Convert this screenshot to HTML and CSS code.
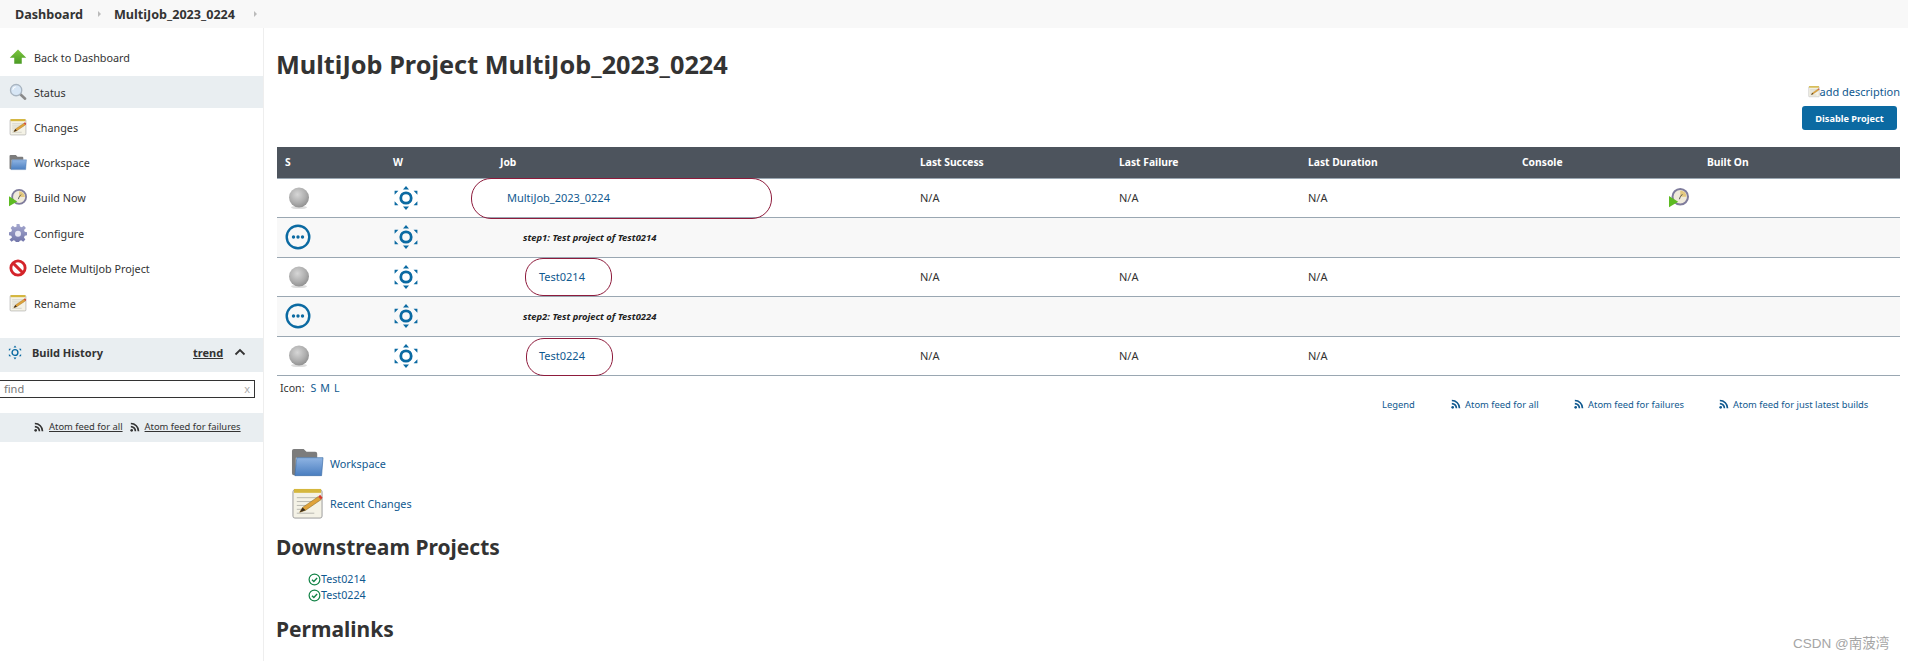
FILE: index.html
```html
<!DOCTYPE html>
<html lang="en">
<head>
<meta charset="utf-8">
<title>MultiJob_2023_0224</title>
<link rel="stylesheet" href="styles.css">
</head>
<body>
<svg class="sprite" aria-hidden="true">
  <defs>
    <radialGradient id="gBall" cx="42%" cy="35%" r="70%"><stop offset="0" stop-color="#d6d6d6"/><stop offset=".6" stop-color="#aeaeae"/><stop offset="1" stop-color="#8c8c8c"/></radialGradient>
    <linearGradient id="gFolder" x1="0" y1="0" x2="0" y2="1"><stop offset="0" stop-color="#8fb4e3"/><stop offset="1" stop-color="#4a7ec0"/></linearGradient>
    <linearGradient id="gArrow" x1="0" y1="0" x2="0" y2="1"><stop offset="0" stop-color="#7cc63e"/><stop offset="1" stop-color="#4a9a24"/></linearGradient>
    <linearGradient id="gGear" x1="0" y1="0" x2="0" y2="1"><stop offset="0" stop-color="#a5a8cf"/><stop offset="1" stop-color="#6f73a8"/></linearGradient>
    <symbol id="i-ball" viewBox="0 0 24 24"><ellipse cx="12" cy="21.500" rx="8" ry="1.600" fill="#ddd"/><circle cx="12" cy="11.500" r="10" fill="url(#gBall)"/></symbol>
    <symbol id="i-sched" viewBox="0 0 24 24"><circle cx="12" cy="12" r="5.200" fill="none" stroke="#0b6aa2" stroke-width="2.800"/><path fill="#0b6aa2" d="M12 0l3 3.600H9zM12 24l-3-3.600h6zM.6 4.800h3.800L.6 8.800zM23.400 4.800h-3.800l3.800 4zM.6 19.200h3.800L.6 15.200zM23.400 19.200h-3.800l3.800-4z"/></symbol>
    <symbol id="i-pending" viewBox="0 0 26 26"><circle cx="13" cy="13" r="11.300" fill="none" stroke="#0b6aa2" stroke-width="2.400"/><circle cx="8.500" cy="13" r="1.700" fill="#0b6aa2"/><circle cx="13" cy="13" r="1.700" fill="#0b6aa2"/><circle cx="17.500" cy="13" r="1.700" fill="#0b6aa2"/></symbol>
    <symbol id="i-up" viewBox="0 0 24 24"><path fill="url(#gArrow)" d="M12 2L23 13h-6v8H7v-8H1z"/></symbol>
    <symbol id="i-search" viewBox="0 0 24 24"><path d="M14 14l7.500 7" stroke="#8a8a8a" stroke-width="3.400" stroke-linecap="round"/><circle cx="9.500" cy="9.500" r="7.500" fill="#d7e6f5" stroke="#a8b4c0" stroke-width="1.800"/><path d="M5 9a5 5 0 0 1 4-4" fill="none" stroke="#fff" stroke-width="1.500"/></symbol>
    <symbol id="i-note" viewBox="0 0 34 34"><rect x="2" y="3" width="30" height="29" rx="2" fill="#f4f2e6" stroke="#9a9a9a"/><rect x="3" y="2" width="28" height="4" fill="#d5b73d"/><path d="M6 11h22M6 15h22M6 19h12M6 23h8M6 27h18" stroke="#b8b8b0"/><path d="M9 26l3-5L28 10l3 3-16 11z" fill="#e0a33a" stroke="#8b6a20" stroke-width=".6"/><path d="M28 10l3 3 1.500-2-2.500-3z" fill="#d43c2c"/><path d="M9 26l3-5 3 3z" fill="#3a2c1c"/></symbol>
    <symbol id="i-folder" viewBox="0 0 34 32"><path d="M1 3a2 2 0 0 1 2-2h10l3 3h9a2 2 0 0 1 2 2v4H5v18H3a2 2 0 0 1-2-2z" fill="#7c7c7c"/><path d="M6 10h27l-1.500 18.500H4z" fill="url(#gFolder)" stroke="#3f6fa8" stroke-width=".7"/></symbol>
    <symbol id="i-build" viewBox="0 0 24 24"><circle cx="13.500" cy="10.500" r="9.300" fill="#efeadb" stroke="#7f7c9c" stroke-width="2.400"/><path d="M13.500 3v7.500h7.500A7.500 7.500 0 0 0 13.500 3z" fill="#e3c87e"/><path d="M13.500 10.500l2.500-3M13.500 10.500l-1 3" stroke="#555" stroke-width="1.200"/><path d="M0 9.500v13.500l11-6.500z" fill="#5dbb22"/></symbol>
    <symbol id="i-gear" viewBox="0 0 24 24"><path fill="url(#gGear)" d="M10 1h4l.7 3.200 2.300 1 2.800-1.800 2.800 2.800L20 9l1 2.300 3 .7v4l-3 .7-1 2.300 1.800 2.800-2.800 2.800-2.800-1.800-2.300 1-.7 3h-4l-.7-3-2.300-1-2.800 1.800-2.800-2.800L4 19l-1-2.300-3-.7v-4l3-.7 1-2.300L2.200 6.200 5 3.400l2.800 1.800 2.300-1z" transform="translate(0 -1)"/><circle cx="12" cy="13" r="4" fill="#e8e8f4"/></symbol>
    <symbol id="i-no" viewBox="0 0 24 24"><circle cx="12" cy="12" r="9.500" fill="#fff" stroke="#d4242a" stroke-width="3.800"/><path d="M5.500 5.500l13 13" stroke="#d4242a" stroke-width="3.800"/></symbol>
    <symbol id="i-rss" viewBox="0 0 12 12"><circle cx="2" cy="10" r="1.600" fill="currentColor"/><path d="M1 5.500A5.500 5.500 0 0 1 6.500 11M1 1.800A9.200 9.200 0 0 1 10.200 11" fill="none" stroke="currentColor" stroke-width="2"/></symbol>
    <symbol id="i-check" viewBox="0 0 14 14"><circle cx="7" cy="7" r="5.800" fill="none" stroke="#138347" stroke-width="1.300"/><path d="M4.300 7.200l2 2 3.500-3.800" fill="none" stroke="#138347" stroke-width="1.500"/></symbol>
    <symbol id="i-sun" viewBox="0 0 24 24"><circle cx="12" cy="12" r="5" fill="none" stroke="#0b6aa2" stroke-width="2.400"/><path fill="#0b6aa2" d="M12 0l2.500 3.500h-5zM12 24l-2.500-3.500h5zM1.500 5.500h4L1.500 9.500zM22.500 5.500h-4l4 4zM1.500 18.500h4l-4-4zM22.500 18.500h-4l4-4z"/></symbol>
  </defs>
</svg>

<header class="crumbs">
  <a class="crumb">Dashboard</a><span class="sep"></span>
  <a class="crumb">MultiJob_2023_0224</a><span class="sep sep-end"></span>
</header>

<div class="page">
  <aside class="side">
    <nav class="tasks">
      <a class="task"><svg class="ticon"><use href="#i-up"/></svg>Back to Dashboard</a>
      <a class="task active"><svg class="ticon"><use href="#i-search"/></svg>Status</a>
      <a class="task"><svg class="ticon"><use href="#i-note"/></svg>Changes</a>
      <a class="task"><svg class="ticon"><use href="#i-folder"/></svg>Workspace</a>
      <a class="task"><svg class="ticon"><use href="#i-build"/></svg>Build Now</a>
      <a class="task"><svg class="ticon"><use href="#i-gear"/></svg>Configure</a>
      <a class="task"><svg class="ticon"><use href="#i-no"/></svg>Delete MultiJob Project</a>
      <a class="task"><svg class="ticon"><use href="#i-note"/></svg>Rename</a>
    </nav>
    <div class="hist-head">
      <svg class="sun"><use href="#i-sun"/></svg>
      <span class="hist-title">Build History</span>
      <a class="trend">trend</a>
      <svg class="chev" viewBox="0 0 12 8"><path d="M1.500 6.500L6 2l4.500 4.500" fill="none" stroke="#333" stroke-width="1.800"/></svg>
    </div>
    <div class="find"><span class="find-t">find</span><span class="find-x">x</span></div>
    <div class="hist-feed">
      <svg class="rss"><use href="#i-rss"/></svg><a>Atom feed for all</a>
      <svg class="rss"><use href="#i-rss"/></svg><a>Atom feed for failures</a>
    </div>
  </aside>

  <main class="main">
    <h1 class="title">MultiJob Project MultiJob_2023_0224</h1>
    <div class="desc"><svg class="desc-i"><use href="#i-note"/></svg><a>add description</a></div>
    <div class="btn-row"><button class="btn">Disable Project</button></div>

    <div class="tablewrap">
      <table class="jobs">
        <colgroup><col class="c1"><col class="c2"><col class="c3"><col class="c4"><col class="c5"><col class="c6"><col class="c7"><col></colgroup>
        <thead><tr><th>S</th><th>W</th><th>Job</th><th>Last Success</th><th>Last Failure</th><th>Last Duration</th><th>Console</th><th class="built">Built On</th></tr></thead>
        <tbody>
          <tr>
            <td><svg class="ball"><use href="#i-ball"/></svg></td><td><svg class="sched"><use href="#i-sched"/></svg></td>
            <td><a class="job j0">MultiJob_2023_0224</a></td><td>N/A</td><td>N/A</td><td>N/A</td><td></td>
            <td><svg class="node"><use href="#i-build"/></svg></td>
          </tr>
          <tr class="step">
            <td><svg class="pend"><use href="#i-pending"/></svg></td><td><svg class="sched"><use href="#i-sched"/></svg></td>
            <td colspan="6"><b class="stepname">step1: Test project of Test0214</b></td>
          </tr>
          <tr>
            <td><svg class="ball"><use href="#i-ball"/></svg></td><td><svg class="sched"><use href="#i-sched"/></svg></td>
            <td><a class="job j1">Test0214</a></td><td>N/A</td><td>N/A</td><td>N/A</td><td></td><td></td>
          </tr>
          <tr class="step">
            <td><svg class="pend"><use href="#i-pending"/></svg></td><td><svg class="sched"><use href="#i-sched"/></svg></td>
            <td colspan="6"><b class="stepname">step2: Test project of Test0224</b></td>
          </tr>
          <tr>
            <td><svg class="ball"><use href="#i-ball"/></svg></td><td><svg class="sched"><use href="#i-sched"/></svg></td>
            <td><a class="job j1">Test0224</a></td><td>N/A</td><td>N/A</td><td>N/A</td><td></td><td></td>
          </tr>
        </tbody>
      </table>
      <span class="oval oval-a"></span>
      <span class="oval oval-b"></span>
      <span class="oval oval-c"></span>
    </div>

    <div class="iconsize">Icon:<a>S</a><a>M</a><a>L</a></div>
    <div class="legend">
      <a class="leg">Legend</a>
      <a class="feed f1"><svg class="rss"><use href="#i-rss"/></svg>Atom feed for all</a>
      <a class="feed f2"><svg class="rss"><use href="#i-rss"/></svg>Atom feed for failures</a>
      <a class="feed f3"><svg class="rss"><use href="#i-rss"/></svg>Atom feed for just latest builds</a>
    </div>

    <div class="biglink first"><svg class="bigi"><use href="#i-folder"/></svg><a>Workspace</a></div>
    <div class="biglink"><svg class="bigi"><use href="#i-note"/></svg><a>Recent Changes</a></div>

    <h2 class="sub">Downstream Projects</h2>
    <ul class="down">
      <li><svg class="chk"><use href="#i-check"/></svg><a>Test0214</a></li>
      <li><svg class="chk"><use href="#i-check"/></svg><a>Test0224</a></li>
    </ul>
    <h2 class="sub perma">Permalinks</h2>
  </main>
</div>
<div class="mark">CSDN @南菠湾</div>
</body>
</html>
```

FILE: styles.css
```css
* { box-sizing: border-box; }
html, body { margin: 0; padding: 0; height: 661px; overflow: hidden; background: #fff; }
body { font-family: "Noto Sans", "Open Sans", sans-serif; font-size: 11px; color: #333; position: relative; }
a { color: #10598f; }
.sprite { position: absolute; width: 0; height: 0; }

.crumbs { height: 28px; background: #f8f8f8; display: flex; align-items: center; padding-left: 15px; }
.crumb { font-weight: 700; font-size: 12.6px; color: #333; }
.sep { width: 0; height: 0; margin: 0 13px 0 15px; border-left: 3px solid #bbb; border-top: 3px solid transparent; border-bottom: 3px solid transparent; }
.sep-end { margin-left: 19px; }

.page { display: flex; height: 633px; }
.side { width: 264px; flex: none; border-right: 1px solid #eee; }
.tasks { display: flex; flex-direction: column; gap: 3px; padding-top: 13px; }
.task { height: 32.2px; display: flex; align-items: center; gap: 7px; padding-left: 9px; color: #333; font-size: 10.8px; }
.task.active { background: #e9eef1; }
.ticon { width: 18px; height: 18px; flex: none; }

.hist-head { margin-top: 18px; height: 34px; background: #e9eef1; display: flex; align-items: center; padding: 0 0 5px 8px; }
.sun { width: 14px; height: 15px; }
.hist-title { font-weight: 700; margin-left: 10px; width: 161px; color: #333; }
.trend { font-weight: 700; color: #333; text-decoration: underline; }
.chev { width: 12px; height: 8px; margin-left: 11px; }
.find { height: 18px; margin-top: 8px; margin-right: 8px; border: 1px solid #333; border-left: 0; display: flex; justify-content: space-between; align-items: center; padding: 0 4px; color: #777; }
.find-x { color: #aaa; }
.hist-feed { margin-top: 15px; height: 29px; display: flex; align-items: center; background: #e9eef1; font-size: 9.4px; padding-left: 34px; }
.hist-feed a { color: #333; text-decoration: underline; margin-right: 7px; margin-left: 5px; line-height: 14px; }
.hist-feed .rss { color: #333; }
.rss { width: 10px; height: 10px; flex: none; }

.main { flex: 1; padding: 20px 8px 0 13px; min-width: 0; }
.title { margin: 0 0 0 -1px; font-size: 25.3px; line-height: 32px; font-weight: 700; color: #333; }
.desc { margin-top: 3px; height: 16px; display: flex; justify-content: flex-end; align-items: center; font-size: 11px; }
.desc-i { width: 12px; height: 13px; }
.btn-row { display: flex; justify-content: flex-end; margin-top: 7px; padding-right: 3px; }
.btn { width: 95px; height: 24px; border: 0; border-radius: 3px; background: #0b6aa2; color: #fff; font: 700 9.2px "Noto Sans", sans-serif; padding: 0; }

.tablewrap { position: relative; margin-top: 17px; }
.jobs { width: 100%; table-layout: fixed; border-collapse: collapse; }
.c1 { width: 108px; } .c2 { width: 107px; } .c3 { width: 420px; } .c4 { width: 199px; } .c5 { width: 189px; } .c6 { width: 214px; } .c7 { width: 146px; }
.jobs th { height: 31px; background: #4d545d; color: #fff; font-size: 10.3px; font-weight: 700; text-align: left; padding: 0 0 0 8px; border-bottom: 1px solid #9aa7b2; }
.jobs th.built { padding-left: 47px; }
.jobs td { height: 39.5px; padding: 0 0 0 8px; border-bottom: 1px solid #9aa7b2; font-size: 11px; color: #333; vertical-align: middle; }
.jobs td svg { display: block; }
.step td { background: #f8f8f8; }
.ball { width: 24px; height: 24px; margin-left: 2px; }
.pend { width: 26px; height: 26px; }
.sched { width: 24px; height: 24px; margin-left: 1px; }
.node { width: 20px; height: 20px; margin-left: 1px; }
.job { display: block; }
.j0 { padding-left: 7px; }
.j1 { padding-left: 39px; }
.stepname { display: block; padding-left: 23px; font-size: 9.4px; font-style: italic; color: #222; }

.oval { position: absolute; border: 1px solid #8e1b3c; }
.oval-a { left: 194px; top: 31px; width: 301px; height: 41px; border-radius: 20px; }
.oval-b { left: 248px; top: 111px; width: 87px; height: 38px; border-radius: 18px; }
.oval-c { left: 249px; top: 191px; width: 87px; height: 38px; border-radius: 18px; }

.iconsize { margin-top: 4px; height: 16px; line-height: 16px; padding-left: 3px; display: flex; gap: 4px; font-size: 10.6px; }
.iconsize a:first-of-type { margin-left: 2px; }
.legend { height: 16px; display: flex; align-items: center; font-size: 9.4px; }
.leg { margin-left: 1105px; width: 69px; }
.feed { display: flex; align-items: center; gap: 4px; }
.f1 { width: 123px; }
.f2 { width: 145px; }

.biglink { display: flex; align-items: center; gap: 6px; padding-left: 14px; height: 36px; font-size: 10.8px; }
.first { margin-top: 34px; height: 34px; margin-bottom: 5px; }
.bigi { width: 33px; height: 33px; }
.sub { margin: 12px 0 0 -1px; font-size: 21px; line-height: 28px; font-weight: 700; color: #333; }
.down { list-style: none; margin: 10px 0 0; padding: 0 0 0 31px; }
.down li { height: 16px; display: flex; align-items: center; font-size: 10.7px; }
.chk { width: 13px; height: 13px; }
.perma { margin-top: 12px; }

.mark { position: absolute; left: 1793px; top: 635px; font: 13.5px/18px "Liberation Sans", "Noto Sans CJK SC", sans-serif; color: #a5a5a5; }
```
